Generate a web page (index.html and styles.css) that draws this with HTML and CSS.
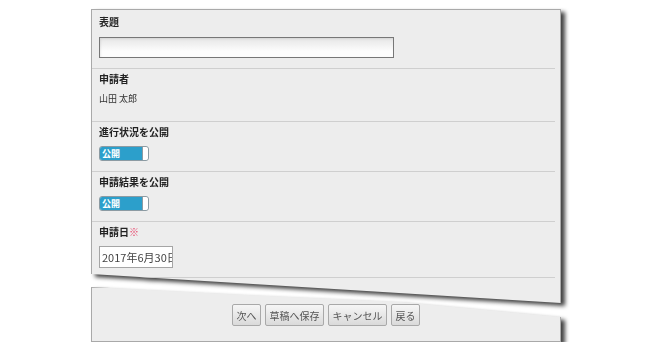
FILE: index.html
```html
<!DOCTYPE html>
<html lang="ja">
<head>
  <meta charset="utf-8">
  <meta name="viewport" content="width=device-width, initial-scale=1">
  <title>申請フォーム</title>
  <link rel="stylesheet" href="styles.css">
</head>
<body>
  <div class="sheet">
    <div class="shade">
      <div class="panel panel-top">
        <div class="field field-first">
          <div class="label">表題</div>
          <input class="title-input" type="text">
        </div>

        <div class="field field-value">
          <div class="label">申請者</div>
          <div class="value">山田 太郎</div>
        </div>

        <div class="field">
          <div class="label">進行状況を公開</div>
          <div class="toggle">
            <span class="toggle-on">公開</span>
            <span class="toggle-knob"></span>
          </div>
        </div>

        <div class="field">
          <div class="label">申請結果を公開</div>
          <div class="toggle">
            <span class="toggle-on">公開</span>
            <span class="toggle-knob"></span>
          </div>
        </div>

        <div class="field field-date">
          <div class="label">申請日<span class="required">※</span></div>
          <input class="date-input" type="text" value="2017年6月30日">
        </div>
      </div>
    </div>

    <div class="shade">
      <div class="panel panel-bottom">
        <div class="buttons">
          <button>次へ</button>
          <button>草稿へ保存</button>
          <button>キャンセル</button>
          <button>戻る</button>
        </div>
      </div>
    </div>
  </div>
</body>
</html>
```

FILE: styles.css
```css
body {
  margin: 0;
  background: #fff;
  font-family: "Noto Sans CJK JP", "DejaVu Sans", sans-serif;
  color: #222;
}

.sheet {
  width: 470px;
  margin-left: 91px;
  padding-top: 9px;
}

/* shadow follows the clipped shape of the panel inside */
.shade {
  filter: drop-shadow(4px 3px 2px rgba(0, 0, 0, 0.75));
}

.panel {
  box-sizing: border-box;
  background: #ededed;
  border: 1px solid #a9a9a9;
}

.panel-top {
  border-bottom: none;
  padding: 0 5px 25px 0;
  clip-path: polygon(0 0, 100% 0, 100% 100%, 0 calc(100% - 29px));
}

.panel-bottom {
  margin-top: -16px;
  padding: 16px 0 15px;
  clip-path: polygon(0 0, 33% 8px, 66% 15px, 100% 30px, 100% 100%, 0 100%);
}

.field {
  padding: 3px 0 10px 7px;
  border-bottom: 1px solid #cfcfcf;
}

.field-first {
  padding-top: 5px;
}

.field-value {
  padding-bottom: 15px;
}

.field-date {
  padding-bottom: 9px;
}

.label {
  font-size: 10px;
  line-height: 14px;
  font-weight: bold;
  margin-bottom: 7px;
}

.field-first .label {
  margin-bottom: 8px;
}

.required {
  color: #e8365f;
  font-weight: normal;
}

.value {
  font-size: 9px;
  line-height: 14px;
  margin-top: -1px;
  color: #333;
}

.title-input {
  display: block;
  box-sizing: border-box;
  width: 295px;
  height: 21px;
  margin: 0;
  border: 1px solid #777;
  background: linear-gradient(#e6e6e6, #fdfdfd 70%);
  box-shadow: inset 1px 1px 2px rgba(0, 0, 0, 0.08);
}

.toggle {
  display: flex;
  box-sizing: border-box;
  width: 50px;
  height: 15px;
  border: 1px solid #8c9ba3;
  border-radius: 3px;
  overflow: hidden;
}

.toggle-on {
  flex: 1;
  background: #2c9fcb;
  color: #fff;
  font-size: 9px;
  font-weight: bold;
  line-height: 13px;
  padding-left: 2px;
}

.toggle-knob {
  width: 5px;
  background: #fff;
  border-left: 1px solid #8c9ba3;
  border-radius: 0 2px 2px 0;
}

.date-input {
  display: block;
  box-sizing: border-box;
  width: 74px;
  height: 22px;
  margin: 0;
  padding: 0 0 0 2px;
  border: 1px solid #a5a5a5;
  background: #fff;
  font-family: "Noto Sans CJK JP", "DejaVu Sans", sans-serif;
  font-size: 11px;
  color: #444;
}

.buttons {
  display: flex;
  justify-content: center;
  gap: 4px;
}

button {
  height: 22px;
  padding: 0 3.5px;
  font-family: "Noto Sans CJK JP", "DejaVu Sans", sans-serif;
  font-size: 10px;
  color: #555;
  background: linear-gradient(#f6f6f6, #dadada);
  border: 1px solid #a9a9a9;
  border-radius: 2px;
}
```
